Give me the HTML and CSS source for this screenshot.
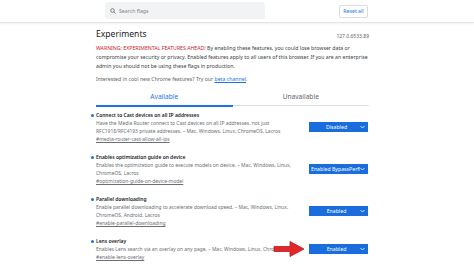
FILE: index.html
```html
<!DOCTYPE html>
<html>
<head>
    <title>Experiments</title>
    <meta charset="utf-8">
    <link rel="stylesheet" href="styles.css">
</head>
<body>
    <div class="header">
        <div class="header-inner">
            <div class="search">
                <svg class="search-icon" width="6" height="6" viewBox="0 0 12 12">
                    <circle cx="5" cy="5" r="3.6" fill="none" stroke="#5f6368" stroke-width="1.6"/>
                    <line x1="7.6" y1="7.6" x2="11" y2="11" stroke="#5f6368" stroke-width="1.6"/>
                </svg>
                <span class="search-text">Search flags</span>
            </div>
            <button class="reset">Reset all</button>
        </div>
    </div>

    <div class="container">
        <div class="title-row">
            <h1>Experiments</h1>
            <span class="version">127.0.6533.89</span>
        </div>
        <p class="warning"><span class="warn">WARNING: EXPERIMENTAL FEATURES AHEAD!</span> By enabling these features, you could lose browser data or<br>compromise your security or privacy. Enabled features apply to all users of this browser. If you are an enterprise<br>admin you should not be using these flags in production.</p>
        <p class="promo">Interested in cool new Chrome features? Try our <a href="#">beta channel</a>.</p>

        <div class="tabs">
            <div class="tab active">Available</div>
            <div class="tab">Unavailable</div>
        </div>

        <div class="experiment">
            <div class="exp-text">
                <div class="exp-name"><span class="dot"></span>Connect to Cast devices on all IP addresses</div>
                <div class="exp-desc">Have the Media Router connect to Cast devices on all IP addresses, not just<br>RFC1918/RFC4193 private addresses. – Mac, Windows, Linux, ChromeOS, Lacros</div>
                <a class="exp-link" href="#">#media-router-cast-allow-all-ips</a>
            </div>
            <div class="select"><span>Disabled</span><svg class="chev" width="5" height="4" viewBox="0 0 10 6"><polyline points="1,1 5,5 9,1" fill="none" stroke="#fff" stroke-width="1.6"/></svg></div>
        </div>

        <div class="experiment">
            <div class="exp-text">
                <div class="exp-name"><span class="dot"></span>Enables optimization guide on device</div>
                <div class="exp-desc">Enables the optimization guide to execute models on device. – Mac, Windows, Linux,<br>ChromeOS, Lacros</div>
                <a class="exp-link" href="#">#optimization-guide-on-device-model</a>
            </div>
            <div class="select"><span class="long">Enabled BypassPerfR</span><svg class="chev" width="5" height="4" viewBox="0 0 10 6"><polyline points="1,1 5,5 9,1" fill="none" stroke="#fff" stroke-width="1.6"/></svg></div>
        </div>

        <div class="experiment">
            <div class="exp-text">
                <div class="exp-name"><span class="dot"></span>Parallel downloading</div>
                <div class="exp-desc">Enable parallel downloading to accelerate download speed. – Mac, Windows, Linux,<br>ChromeOS, Android, Lacros</div>
                <a class="exp-link" href="#">#enable-parallel-downloading</a>
            </div>
            <div class="select"><span>Enabled</span><svg class="chev" width="5" height="4" viewBox="0 0 10 6"><polyline points="1,1 5,5 9,1" fill="none" stroke="#fff" stroke-width="1.6"/></svg></div>
        </div>

        <div class="experiment last">
            <div class="exp-text">
                <div class="exp-name"><span class="dot"></span>Lens overlay</div>
                <div class="exp-desc">Enables Lens search via an overlay on any page. – Mac, Windows, Linux, ChromeOS</div>
                <a class="exp-link" href="#">#enable-lens-overlay</a>
            </div>
            <div class="select"><span>Enabled</span><svg class="chev" width="5" height="4" viewBox="0 0 10 6"><polyline points="1,1 5,5 9,1" fill="none" stroke="#fff" stroke-width="1.6"/></svg></div>
            <svg class="arrow" width="32" height="18" viewBox="0 0 32 18">
                <path d="M1 6.5 H17 V1.5 L31 9 L17 16.5 V11.5 H1 Z" fill="#e3262b" stroke="#b71c1c" stroke-width="0.8"/>
            </svg>
        </div>
    </div>
</body>
</html>
```

FILE: styles.css
```css
body {
    margin: 0;
    background-color: white;
    font-family: "Noto Sans", "Open Sans", Arial, sans-serif;
    color: #5f6368;
}
.header {
    height: 22px;
    border-bottom: 1px solid #e4e4e4;
    box-shadow: 0 1px 2px rgba(0,0,0,0.06);
}
.header-inner {
    width: 273px;
    margin-left: 96px;
    display: flex;
    align-items: center;
    height: 22px;
}
.search {
    margin-left: 9px;
    margin-top: -1px;
    width: 160px;
    height: 17px;
    background-color: #f1f3f4;
    border-radius: 3px;
    display: flex;
    align-items: center;
}
.search-icon {
    margin-left: 5px;
    margin-right: 3px;
}
.search-text {
    font-size: 5.2px;
    color: #80868b;
}
.reset {
    margin-left: auto;
    margin-right: 1px;
    width: 29px;
    height: 13px;
    padding: 0;
    background: white;
    border: 1px solid #dadce0;
    border-radius: 2px;
    font-family: inherit;
    font-size: 5.2px;
    color: #1a73e8;
}
.container {
    width: 273px;
    margin-left: 96px;
}
.title-row {
    display: flex;
    justify-content: space-between;
    align-items: flex-end;
    margin-top: 5px;
}
h1 {
    margin: 0;
    font-size: 8.6px;
    line-height: 12px;
    font-weight: normal;
    color: #202124;
}
.version {
    font-size: 5px;
    line-height: 8px;
    margin-bottom: 0;
}
.warning {
    margin: 3.5px 0 0;
    font-size: 5.2px;
    line-height: 9px;
    white-space: nowrap;
    color: #3c4043;
}
.warn {
    color: #c5221f;
}
.promo {
    margin: 4px 0 0;
    font-size: 5.2px;
    line-height: 9px;
}
.promo a {
    color: #1a73e8;
}
.tabs {
    display: flex;
    margin-top: 8.5px;
    margin-bottom: 4px;
}
.tab {
    flex: 1;
    text-align: center;
    font-size: 6.6px;
    line-height: 10px;
    padding-bottom: 3px;
    border-bottom: 1px solid #dadce0;
    margin-bottom: 1px;
    color: #5f6368;
}
.tab.active {
    color: #1a73e8;
    border-bottom: 2px solid #1a73e8;
    margin-bottom: 0;
}
.experiment {
    display: flex;
    align-items: center;
    justify-content: space-between;
    margin-bottom: 10px;
    position: relative;
}
.exp-text {
    font-size: 4.95px;
    line-height: 8px;
    white-space: nowrap;
}
.exp-name {
    position: relative;
    font-weight: 600;
    color: #202124;
}
.dot {
    position: absolute;
    left: -5.5px;
    top: 2.5px;
    width: 3px;
    height: 3px;
    border-radius: 50%;
    background-color: #1a73e8;
}
.exp-desc {
    color: #6b6f74;
}
.exp-link {
    color: #6b6f74;
}
.select {
    width: 59px;
    height: 10px;
    margin-right: 1px;
    background-color: #1a6ddc;
    color: white;
    font-size: 5.2px;
    display: flex;
    align-items: center;
    position: relative;
    overflow: hidden;
}
.select span {
    flex: 1;
    text-align: center;
    padding-right: 4px;
}
.select span.long {
    text-align: left;
    padding-left: 2px;
    white-space: nowrap;
}
.chev {
    position: absolute;
    right: 3px;
    top: 3px;
}
.select span.long + .chev {
    background-color: #1a6ddc;
}
.arrow {
    position: absolute;
    left: 177px;
    top: 3px;
}
```
